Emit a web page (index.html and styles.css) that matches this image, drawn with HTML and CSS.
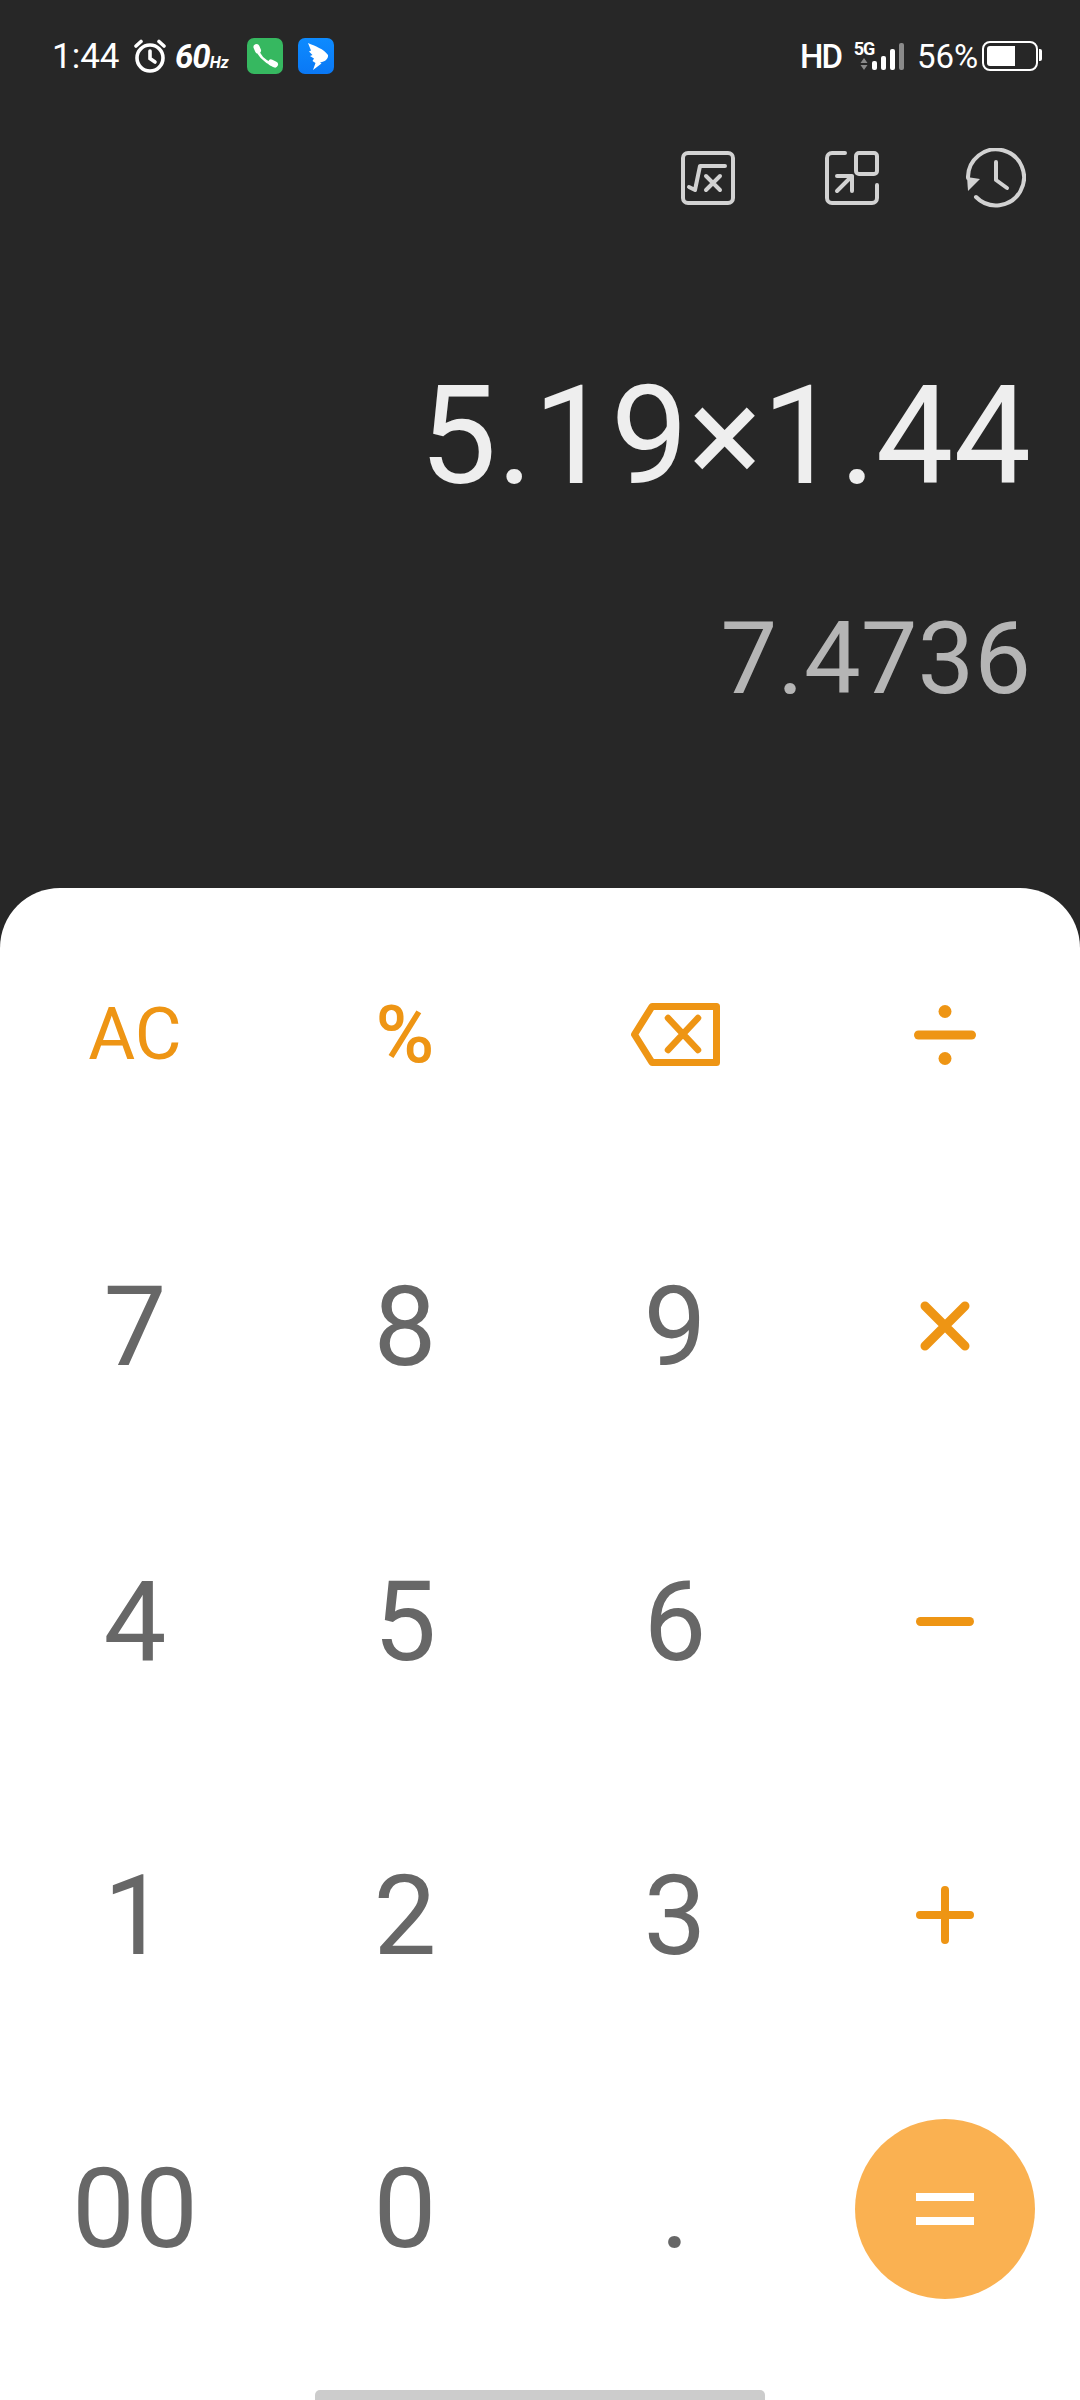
FILE: index.html
```html
<!DOCTYPE html>
<html>
<head>
	<meta name="viewport" content="width=device-width, initial-scale=1.0">
	<link rel="stylesheet" href="styles.css">
</head>
<body>
	<div id="main">
		<!-- dark part: status bar, tools and display -->
		<div class="top">
			<div class="status">
				<div class="status-left">
					<span class="time">1:44</span>
					<svg class="alarm" width="36" height="34" viewBox="0 0 36 34" fill="none" stroke="#fff" stroke-width="3.6" stroke-linecap="round">
						<circle cx="18" cy="19" r="13"/>
						<path d="M18 12v7.500l5 3.500"/>
						<path d="M4 7l5-4.500M32 7l-5-4.500"/>
					</svg>
					<span class="hz"><b>60</b><i>Hz</i></span>
					<span class="app app-green">
						<svg width="36" height="36" viewBox="0 0 36 36" fill="none" stroke="#fff" stroke-linecap="round">
							<path d="M10 10c1 6 5 12 16 17" stroke-width="2.500"/>
							<path d="M9.500 9l1.500 3.500M24 24.500l4 2" stroke-width="6"/>
						</svg>
					</span>
					<span class="app app-blue">
						<svg width="36" height="36" viewBox="0 0 36 36"><path d="M10 5c7 3 16 6 20 12 .5 3-2 6-6 7l-2 .5 1.500 1L15 32l2.500-7-3-2 1.500-2.500-4-2.500 2.500-1-3.500-3.500 2-1z" fill="#fff"/></svg>
					</span>
				</div>
				<div class="status-right">
					<span class="hd">HD</span>
					<span class="net">
						<span class="net-label">5G</span>
						<svg width="8" height="12" viewBox="0 0 8 12"><path d="M4 0l3.500 5h-7zM4 12L.5 7h7z" fill="#8a8a8a"/></svg>
					</span>
					<span class="bars">
						<i class="bar bar1"></i><i class="bar bar2"></i><i class="bar bar3"></i><i class="bar bar4"></i>
					</span>
					<span class="pct">56%</span>
					<span class="battery"><span class="battery-fill"></span></span>
				</div>
			</div>

			<div class="tools">
				<svg class="tool" width="54" height="54" viewBox="0 0 54 54" fill="none" stroke="#d2d2d2" stroke-width="4" stroke-linecap="round" stroke-linejoin="round">
					<rect x="2" y="2" width="50" height="50" rx="5"/>
					<path d="M8 36l6 3 5-24h25"/>
					<path d="M25 25l14 14M39 25L25 39"/>
				</svg>
				<svg class="tool" width="54" height="54" viewBox="0 0 54 54" fill="none" stroke="#d2d2d2" stroke-width="4" stroke-linecap="round" stroke-linejoin="round">
					<path d="M20 2H7a5 5 0 0 0-5 5v40a5 5 0 0 0 5 5h40a5 5 0 0 0 5-5V34"/>
					<rect x="31" y="2" width="21" height="21" rx="3"/>
					<path d="M12 40l15-15M12 25h15v15"/>
				</svg>
				<svg class="tool tool-clock" width="60" height="60" viewBox="0 0 60 60" fill="none" stroke="#d2d2d2" stroke-width="4" stroke-linecap="round" stroke-linejoin="round">
					<path d="M10 49a28 28 0 1 0-8-19"/>
					<path d="M30 14v18l11 8"/>
					<path d="M2 43l-1-14 13 2z" fill="#d2d2d2" stroke="none"/>
				</svg>
			</div>

			<div class="expression">5.19×1.44</div>
			<div class="result">7.4736</div>
		</div>

		<!-- white keypad -->
		<div class="sheet">
			<div class="keys">
				<div class="key key-op key-ac">AC</div>
				<div class="key key-op key-pct">%</div>
				<div class="key">
					<svg width="89" height="63" viewBox="0 0 89 63" fill="none" stroke="#ee9514" stroke-linejoin="round" stroke-linecap="round">
						<path d="M21 3.500h64.500v56H21L3.500 31.500z" stroke-width="7"/>
						<path d="M37 15l30 32M67 15L37 47" stroke-width="6.500"/>
					</svg>
				</div>
				<div class="key">
					<svg width="62" height="60" viewBox="0 0 62 60">
						<circle cx="31" cy="6.500" r="6.500" fill="#ee9514"/>
						<rect y="25.500" width="62" height="9" rx="4.500" fill="#ee9514"/>
						<circle cx="31" cy="53.500" r="6.500" fill="#ee9514"/>
					</svg>
				</div>

				<div class="key key-up">7</div>
				<div class="key key-up">8</div>
				<div class="key key-up">9</div>
				<div class="key key-up">
					<svg width="50" height="50" viewBox="0 0 50 50" stroke="#ee9514" stroke-width="9" stroke-linecap="round"><path d="M5 5l40 40M45 5L5 45"/></svg>
				</div>

				<div class="key">4</div>
				<div class="key">5</div>
				<div class="key">6</div>
				<div class="key">
					<svg width="58" height="9" viewBox="0 0 58 9"><rect width="58" height="9" rx="4.500" fill="#ee9514"/></svg>
				</div>

				<div class="key">1</div>
				<div class="key">2</div>
				<div class="key">3</div>
				<div class="key">
					<svg width="58" height="58" viewBox="0 0 58 58" stroke="#ee9514" stroke-width="8" stroke-linecap="round"><path d="M4 29h50M29 4v50"/></svg>
				</div>

				<div class="key">00</div>
				<div class="key">0</div>
				<div class="key key-dot">.</div>
				<div class="key">
					<div class="equals"><i></i><i></i></div>
				</div>
			</div>
			<div class="home-bar"></div>
		</div>
	</div>
</body>
</html>
```

FILE: styles.css
```css
html, body {
	margin: 0;
	padding: 0;
}

#main {
	display: flex;
	flex-direction: column;
	width: 1080px;
	height: 2400px;
	overflow: hidden;
	background-color: #272727;
	font-family: Roboto, "Liberation Sans", sans-serif;
}

/* dark part */
.top {
	height: 888px;
	flex: none;
}

/* status bar */
.status {
	display: flex;
	justify-content: space-between;
	align-items: center;
	height: 112px;
	padding: 0 42px 0 52px;
	color: #fff;
}

.status-left, .status-right {
	display: flex;
	align-items: center;
}

.time {
	font-size: 35px;
	width: 80px;
}

.alarm {
	margin-right: 7px;
}

.hz {
	width: 72px;
	font-size: 33px;
	font-style: italic;
	letter-spacing: -1px;
}

.hz i {
	font-size: 16px;
	font-weight: 700;
	letter-spacing: 0;
}

.app {
	display: block;
	width: 36px;
	height: 36px;
	border-radius: 7px;
	margin-right: 15px;
}

.app-green {
	background-color: #36b860;
}

.app-blue {
	margin-right: 0;
	background: linear-gradient(#0d8bff, #0a78f5);
}

.hd {
	width: 52px;
	font-size: 33px;
	font-weight: 500;
	letter-spacing: -2px;
}

.net {
	display: flex;
	flex-direction: column;
	align-items: center;
	gap: 2px;
	width: 24px;
	margin-right: -4px;
}

.net-label {
	font-size: 18px;
	font-weight: 700;
	line-height: 14px;
	letter-spacing: -1px;
}

.bars {
	display: flex;
	align-items: flex-end;
	gap: 4px;
	height: 28px;
	margin-right: 13px;
}

.bar {
	display: block;
	width: 5px;
	border-radius: 2px;
	background-color: #fff;
}

.bar1 { height: 9px; }
.bar2 { height: 14px; }
.bar3 { height: 21px; }
.bar4 { height: 27px; background-color: #8a8a8a; }

.pct {
	width: 65px;
	font-size: 33px;
}

.battery {
	display: block;
	box-sizing: border-box;
	position: relative;
	width: 56px;
	height: 30px;
	border: 2.5px solid #fff;
	border-radius: 8px;
	padding: 3px;
}

.battery::after {
	content: "";
	position: absolute;
	right: -6px;
	top: 6px;
	width: 3px;
	height: 12px;
	background-color: #fff;
	border-radius: 0 2px 2px 0;
}

.battery-fill {
	display: block;
	width: 28px;
	height: 100%;
	background-color: #fff;
	border-radius: 3px 0 0 3px;
}

/* tool icons */
.tools {
	display: flex;
	justify-content: flex-end;
	align-items: center;
	height: 68px;
	margin-top: 32px;
	padding-right: 54px;
}

.tool {
	margin-left: 90px;
}

.tool-clock {
	margin-left: 87px;
}

/* display */
.expression {
	margin-top: 144px;
	padding-right: 49px;
	text-align: right;
	color: #eeeeee;
	font-size: 138px;
	line-height: 160px;
}

.result {
	margin-top: 83px;
	padding-right: 49px;
	text-align: right;
	color: #b5b5b5;
	font-size: 101px;
	line-height: 120px;
}

/* keypad */
.sheet {
	flex: 1;
	display: flex;
	flex-direction: column;
	background-color: #fff;
	border-radius: 60px 60px 0 0;
}

.keys {
	display: grid;
	grid-template-columns: repeat(4, 270px);
	grid-auto-rows: 293.5px;
}

.key {
	display: flex;
	justify-content: center;
	align-items: center;
	color: #676767;
	font-size: 112px;
}

/* second row sits a little higher */
.key-up {
	padding-bottom: 4px;
}

.key-op {
	color: #ee9514;
}

.key-ac {
	font-size: 72px;
}

.key-pct {
	font-size: 80px;
	font-weight: 500;
}

.equals {
	display: flex;
	flex-direction: column;
	justify-content: center;
	align-items: center;
	gap: 16px;
	width: 180px;
	height: 180px;
	border-radius: 50%;
	background-color: #fab151;
}

.equals i {
	display: block;
	width: 58px;
	height: 8px;
	background-color: #fff;
}

.home-bar {
	width: 450px;
	height: 10px;
	margin: auto auto 0;
	background-color: #cccccc;
	border-radius: 5px 5px 0 0;
}
```
